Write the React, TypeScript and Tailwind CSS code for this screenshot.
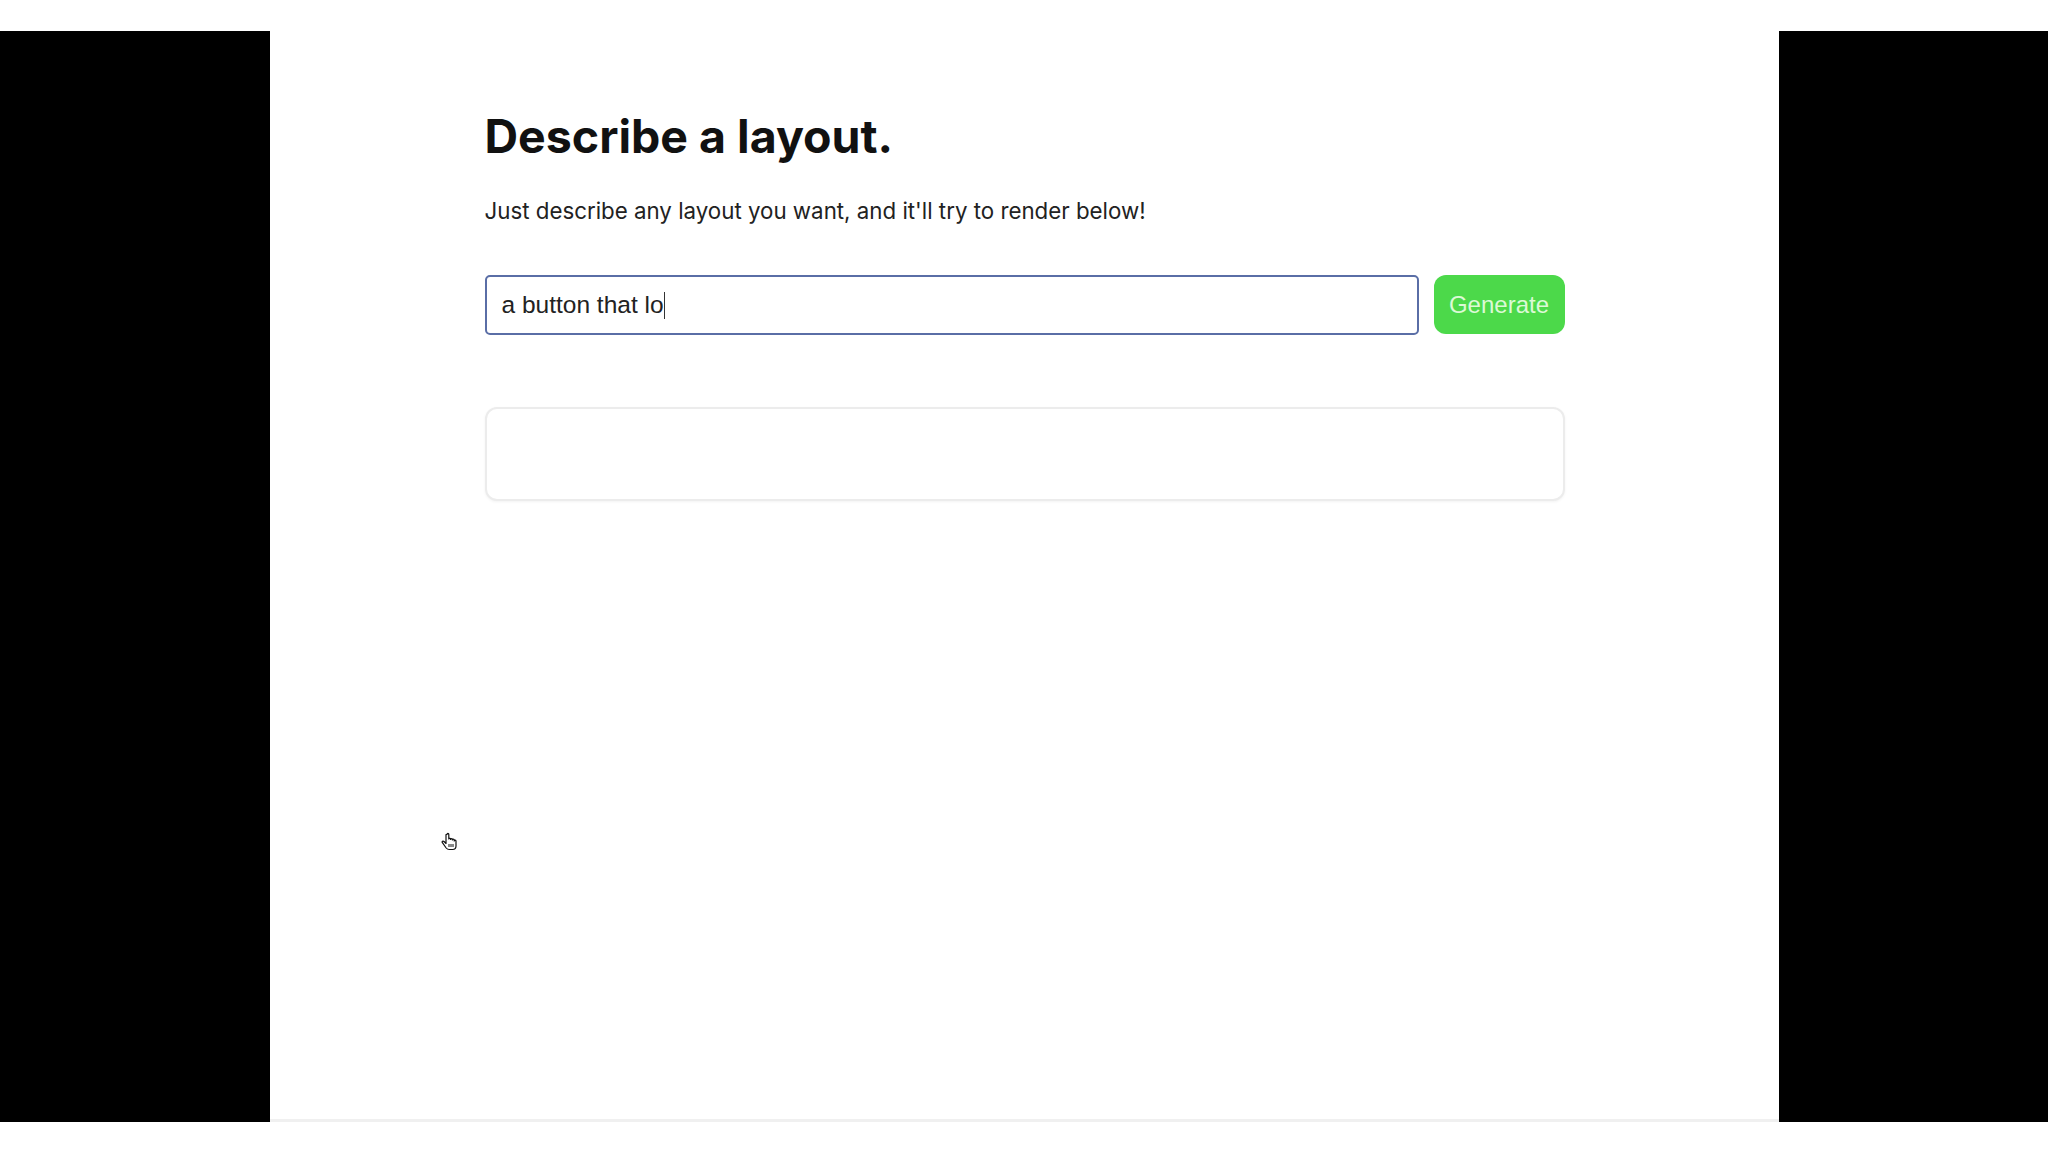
import React from "react";

export default function App() {
  return (
    <div className="w-[2048px] h-[1152px] bg-white flex flex-col overflow-hidden" style={{ fontFamily: "Inter, 'Liberation Sans', sans-serif" }}>
      <div className="h-[31px] shrink-0 bg-white" />
      <div className="h-[1091px] shrink-0 flex">
        <div className="w-[270px] bg-black shrink-0" />
        <div className="flex-1 bg-white relative flex flex-col items-center border-b-[3px] border-[#f0f0f0]">
          <div className="w-[1080px] flex flex-col pt-[77px]">
            <h1 className="text-[46.5px] font-bold leading-[56px] text-[#111]">Describe a layout.</h1>
            <p className="mt-[33px] text-[22.3px] leading-[28px] text-[#222]">
              Just describe any layout you want, and it'll try to render below!
            </p>
            <div className="mt-[50px] flex gap-[15px]">
              <div className="w-[934px] h-[60px] border-2 border-[#5a6ea6] rounded-[5px] flex items-center px-[15px] bg-white">
                <span className="text-[24.5px] text-[#222]" style={{ fontFamily: "'Liberation Sans', Arial, sans-serif" }}>a button that lo</span>
                <span className="w-[1.5px] h-[27px] bg-[#333]" />
              </div>
              <button className="w-[131px] h-[59px] rounded-[12px] bg-[#4cd94a] text-[24px] text-[#dcf9d6]" style={{ fontFamily: "'Liberation Sans', Arial, sans-serif" }}>
                Generate
              </button>
            </div>
            <div className="mt-[72px] h-[94px] border-2 border-[#ececec] rounded-[12px] shadow-[0_1px_3px_rgba(0,0,0,0.05)] bg-white" />
          </div>
          <svg className="absolute left-[170px] top-[801px]" width="18" height="20" viewBox="0 0 18 20">
            <path d="M6 2.5v9l-2-2c-1-1-2.5 0-1.6 1.2l3.8 5.3c.8 1 1.8 1.5 3 1.5h3.5c2 0 3.3-1.5 3.3-3.5v-5c0-1-1.5-1.3-1.8 0v-1c0-1.2-1.8-1.2-1.8 0v-.5c0-1.2-1.8-1.2-1.8 0v-.5c0-1-1.8-1-1.8 0V2.5c0-1.4-1.8-1.4-1.8 0z" fill="white" stroke="#111" strokeWidth="1.2" strokeLinejoin="round" />
            <path d="M9 12v3M11 12v3M13 12v3" stroke="#111" strokeWidth="1" />
          </svg>
        </div>
        <div className="w-[269px] bg-black shrink-0" />
      </div>
      <div className="flex-1 bg-white" />
    </div>
  );
}
